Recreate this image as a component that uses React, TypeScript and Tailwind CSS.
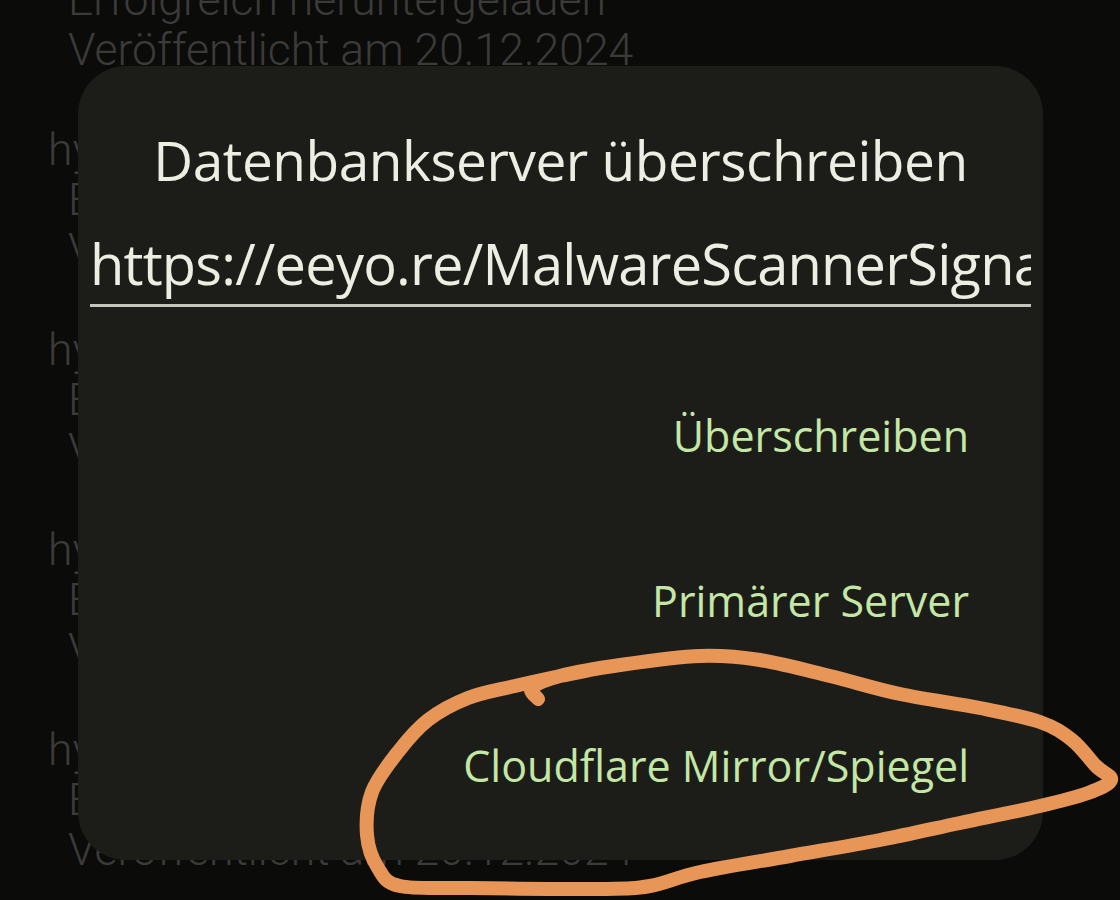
import React from "react";

const bgGroups = [
  { top: -75, name: "hydra-db-signatures-2024", a: "Erfolgreich heruntergeladen", b: "Veröffentlicht am 20.12.2024" },
  { top: 125, name: "hydra-db-signatures-2024", a: "Erfolgreich heruntergeladen", b: "Veröffentlicht am 20.12.2024" },
  { top: 325, name: "hydra-db-signatures-2024", a: "Erfolgreich heruntergeladen", b: "Veröffentlicht am 20.12.2024" },
  { top: 525, name: "hydra-db-signatures-2024", a: "Erfolgreich heruntergeladen", b: "Veröffentlicht am 20.12.2024" },
  { top: 725, name: "hydra-db-signatures-2024", a: "Erfolgreich heruntergeladen", b: "Veröffentlicht am 20.12.2024" },
];

const pts: [number, number][] = [
  [538, 699], [532, 688], [560, 676], [620, 665], [700, 656], [760, 660], [830, 676],
  [900, 694], [980, 708], [1040, 722], [1072, 740], [1096, 766], [1111, 780],
  [1088, 793], [1040, 806], [960, 823], [880, 840], [790, 856], [700, 872],
  [650, 886], [600, 889], [470, 888], [400, 886], [378, 868], [367, 835],
  [372, 792], [398, 752], [428, 720], [468, 698], [515, 686], [560, 676], [590, 670],
];

function catmull(p: [number, number][]) {
  let d = `M ${p[0][0]} ${p[0][1]}`;
  for (let i = 0; i < p.length - 1; i++) {
    const p0 = p[i - 1] || p[i];
    const p1 = p[i];
    const p2 = p[i + 1];
    const p3 = p[i + 2] || p2;
    const c1x = p1[0] + (p2[0] - p0[0]) / 6;
    const c1y = p1[1] + (p2[1] - p0[1]) / 6;
    const c2x = p2[0] - (p3[0] - p1[0]) / 6;
    const c2y = p2[1] - (p3[1] - p1[1]) / 6;
    d += ` C ${c1x} ${c1y}, ${c2x} ${c2y}, ${p2[0]} ${p2[1]}`;
  }
  return d;
}

export default function App() {
  const sans = { fontFamily: "'Open Sans', 'Noto Sans', sans-serif" };
  return (
    <div className="relative w-[1120px] h-[900px] overflow-hidden bg-[#0b0b0a]">
      {/* background list */}
      <div className="absolute inset-0" style={{ fontFamily: "Roboto, 'Noto Sans', sans-serif" }}>
        {bgGroups.map((g, i) => (
          <div
            key={i}
            className="absolute left-0 flex flex-col text-[44.5px] font-light leading-[50px] text-[#3b3b3a]"
            style={{ top: g.top }}
          >
            <div className="pl-[48px] whitespace-nowrap">{g.name}</div>
            <div className="pl-[68px] whitespace-nowrap">{g.a}</div>
            <div className="pl-[68px] whitespace-nowrap">{g.b}</div>
          </div>
        ))}
      </div>

      {/* dialog */}
      <div
        className="absolute left-[78px] top-[66px] w-[965px] h-[794px] rounded-[48px] bg-[#1c1d18] flex flex-col px-[10px]"
        style={sans}
      >
        <div className="mt-[62px] text-center text-[#eceee4] text-[55px] leading-[64px] tracking-[-0.5px]">
          Datenbankserver überschreiben
        </div>
        <div className="mt-[32px] mx-[2px] overflow-hidden border-b-[3px] border-[#c4c6bc]">
          <div className="whitespace-nowrap text-[#eceee4] text-[56px] leading-[78px] tracking-[-0.8px] pb-[2px]">
            https://eeyo.re/MalwareScannerSignatures
          </div>
        </div>
        <div className="flex flex-col items-end pr-[64px] mt-[105px] gap-[117px] text-[#c4e7a6] text-[43px] leading-[48px]">
          <div>Überschreiben</div>
          <div>Primärer Server</div>
          <div>Cloudflare Mirror/Spiegel</div>
        </div>
      </div>

      {/* annotation */}
      <svg className="absolute inset-0 pointer-events-none" width="1120" height="900" viewBox="0 0 1120 900">
        <path
          d={catmull(pts)}
          fill="none"
          stroke="#e89558"
          strokeWidth={14}
          strokeLinecap="round"
          strokeLinejoin="round"
        />
      </svg>
    </div>
  );
}
